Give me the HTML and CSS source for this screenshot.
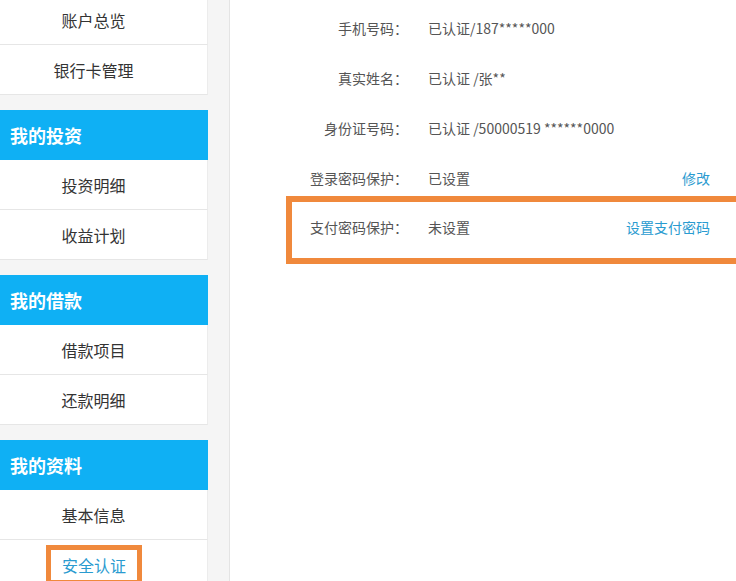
FILE: index.html
```html
<!DOCTYPE html>
<html lang="zh-CN">
<head>
  <meta charset="UTF-8" />
  <title>安全认证</title>
<link rel="stylesheet" href="styles.css">
</head>
<body>

  <div class="page">
    <!-- 左侧菜单 -->
    <div class="sidebar">
      <div class="group">
        <a class="item first">账户总览</a>
        <a class="item">银行卡管理</a>
      </div>
      <div class="group">
        <div class="group-title">我的投资</div>
        <a class="item">投资明细</a>
        <a class="item">收益计划</a>
      </div>
      <div class="group">
        <div class="group-title">我的借款</div>
        <a class="item">借款项目</a>
        <a class="item">还款明细</a>
      </div>
      <div class="group">
        <div class="group-title">我的资料</div>
        <a class="item">基本信息</a>
        <a class="item active"><span class="mark">安全认证</span></a>
      </div>
    </div>

    <!-- 右侧内容 -->
    <div class="content">
      <div class="row">
        <span class="label">手机号码：</span>
        <span class="value">已认证/187*****000</span>
      </div>
      <div class="row">
        <span class="label">真实姓名：</span>
        <span class="value">已认证 /张**</span>
      </div>
      <div class="row">
        <span class="label">身份证号码：</span>
        <span class="value">已认证 /50000519 ******0000</span>
      </div>
      <div class="row">
        <span class="label">登录密码保护：</span>
        <span class="value">已设置</span>
        <a class="action">修改</a>
      </div>
      <div class="row highlight">
        <span class="label">支付密码保护：</span>
        <span class="value">未设置</span>
        <a class="action">设置支付密码</a>
      </div>
    </div>
  </div>

</body>
</html>
```

FILE: styles.css
```css
html, body {
  margin: 0;
  height: 100%;
  overflow: hidden;
}

body {
  font-family: "Noto Sans CJK SC", "Open Sans", sans-serif;
  color: #444;
  background: #fff;
}

.page {
  display: flex;
  height: 581px;
  overflow: hidden;
}

/* 左侧菜单 */
.sidebar {
  width: 230px;
  flex-shrink: 0;
  background-color: #f5f5f5;
  border-right: 1px solid #e4e4e4;
  padding-right: 21px;
  box-sizing: border-box;
}

.group {
  margin-bottom: 15px;
}

.group-title {
  height: 50px;
  line-height: 50px;
  padding-left: 10px;
  background-color: #0fb0f4;
  color: #fff;
  font-size: 18px;
  font-weight: bold;
}

.item {
  display: flex;
  align-items: center;
  justify-content: center;
  height: 49px;
  padding-right: 20px;
  background: #fff;
  border-bottom: 1px solid #e6e6e6;
  border-right: 1px solid #ececec;
  font-size: 16px;
  color: #333;
}

.item.first {
  height: 40px;
  padding-bottom: 4px;
}

.item.active {
  color: #2a9bd0;
  align-items: flex-start;
}

.mark {
  display: inline-block;
  margin-top: 5px;
  margin-left: 1px;
  padding: 0 11px;
  line-height: 30px;
  border: 5px solid #f0893c;
}

/* 右侧内容 */
.content {
  flex: 1;
  padding-top: 3px;
}

.row {
  display: flex;
  align-items: center;
  height: 50px;
  margin-left: 62px;
  padding-right: 26px;
  font-size: 14px;
}

.label {
  width: 116px;
  text-align: right;
  color: #555;
}

.value {
  margin-left: 20px;
  flex: 1;
  color: #555;
}

.action {
  color: #2a9bd0;
}

.row.highlight {
  margin-top: -7px;
  margin-left: 56px;
  margin-right: -6px;
  padding-bottom: 6px;
  border: 6px solid #f0893c;
}
```
